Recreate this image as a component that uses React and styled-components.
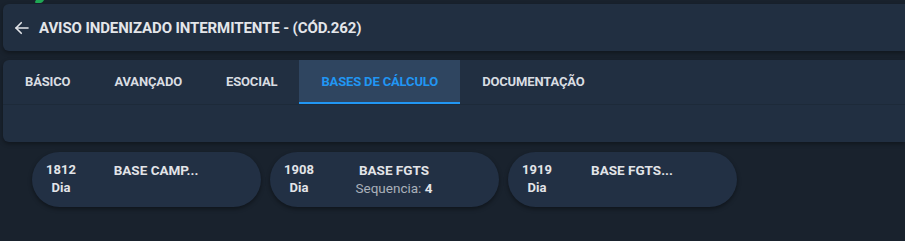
import React from "react";
import styled, { createGlobalStyle } from "styled-components";

const Global = createGlobalStyle`
	body {
		margin: 0;
		background: #ffffff;
		font-family: Roboto, "Liberation Sans", sans-serif;
	}
`;

const Page = styled.div`
	width: 905px;
	height: 241px;
	background: #19222d;
	padding: 4px 0 0 3px;
	box-sizing: border-box;
	position: relative;
	overflow: hidden;
`;

const Mark = styled.div`
	position: absolute;
	top: -3px;
	left: 36px;
	width: 8px;
	height: 6px;
	background: #1fa855;
	border-radius: 2px;
	transform: skewX(-30deg);
`;

const Header = styled.div`
	height: 47px;
	background: #212f41;
	border-radius: 6px 0 0 6px;
	display: flex;
	align-items: center;
	padding-left: 10px;
	gap: 8px;
	box-shadow: 0 2px 4px rgba(0, 0, 0, 0.35);
`;

const Title = styled.h1`
	margin: 0;
	font-size: 15px;
	font-weight: 700;
	color: #e4e6ea;
	letter-spacing: -0.1px;
`;

const TabCard = styled.div`
	margin-top: 9px;
	background: #212f41;
	border-radius: 6px 0 0 6px;
	overflow: hidden;
	box-shadow: 0 2px 4px rgba(0, 0, 0, 0.35);
`;

const Tabs = styled.div`
	display: flex;
	height: 44px;
	border-bottom: 1px solid #1d2a39;
`;

const Tab = styled.div`
	display: flex;
	align-items: center;
	justify-content: center;
	padding: 0 22px;
	font-size: 13px;
	font-weight: 700;
	letter-spacing: -0.15px;
	color: ${(p) => (p.$active ? "#2196f3" : "#d9dde2")};
	background: ${(p) => (p.$active ? "#2f4560" : "transparent")};
	border-bottom: 2px solid ${(p) => (p.$active ? "#2196f3" : "transparent")};
	box-sizing: border-box;
	white-space: nowrap;
`;

const TabBody = styled.div`
	height: 37px;
`;

const Items = styled.div`
	display: flex;
	gap: 9px;
	padding: 10px 0 0 29px;
`;

const Item = styled.div`
	width: 229px;
	height: 55px;
	border-radius: 28px;
	background: #223044;
	box-shadow: 0 2px 4px rgba(0, 0, 0, 0.4);
	display: flex;
	align-items: flex-start;
	padding: 9px 0 0 13px;
	box-sizing: border-box;
	color: #e2e4e8;
	font-size: 13px;
	font-weight: 700;
	line-height: 18px;
`;

const Code = styled.div`
	width: 32px;
	text-align: center;
	display: flex;
	flex-direction: column;
`;

const Name = styled.div`
	width: 130px;
	margin-left: 14px;
	text-align: center;
	display: flex;
	flex-direction: column;
	font-size: 13.5px;
`;

const Seq = styled.span`
	font-weight: 400;
	color: #aab1ba;
	b {
		color: #e2e4e8;
		font-weight: 700;
	}
`;

const Back = () => (
	<svg width="18" height="18" viewBox="0 0 24 24" fill="none" stroke="#e4e6ea" strokeWidth="2.2" strokeLinecap="round" strokeLinejoin="round">
		<path d="M20 12H4" />
		<path d="M11 5l-7 7 7 7" />
	</svg>
);

const tabs = [
	{ label: "BÁSICO" },
	{ label: "AVANÇADO" },
	{ label: "ESOCIAL" },
	{ label: "BASES DE CÁLCULO", active: true },
	{ label: "DOCUMENTAÇÃO" },
];

const items = [
	{ code: "1812", name: "BASE CAMP..." },
	{ code: "1908", name: "BASE FGTS", seq: 4 },
	{ code: "1919", name: "BASE FGTS..." },
];

export default function App() {
	return (
		<Page>
			<Global />
			<Mark />
			<Header>
				<Back />
				<Title>AVISO INDENIZADO INTERMITENTE - (CÓD.262)</Title>
			</Header>
			<TabCard>
				<Tabs>
					{tabs.map((t) => (
						<Tab key={t.label} $active={t.active}>
							{t.label}
						</Tab>
					))}
				</Tabs>
				<TabBody />
			</TabCard>
			<Items>
				{items.map((it) => (
					<Item key={it.code}>
						<Code>
							<span>{it.code}</span>
							<span>Dia</span>
						</Code>
						<Name>
							<span>{it.name}</span>
							{it.seq && (
								<Seq>
									Sequencia: <b>{it.seq}</b>
								</Seq>
							)}
						</Name>
					</Item>
				))}
			</Items>
		</Page>
	);
}
